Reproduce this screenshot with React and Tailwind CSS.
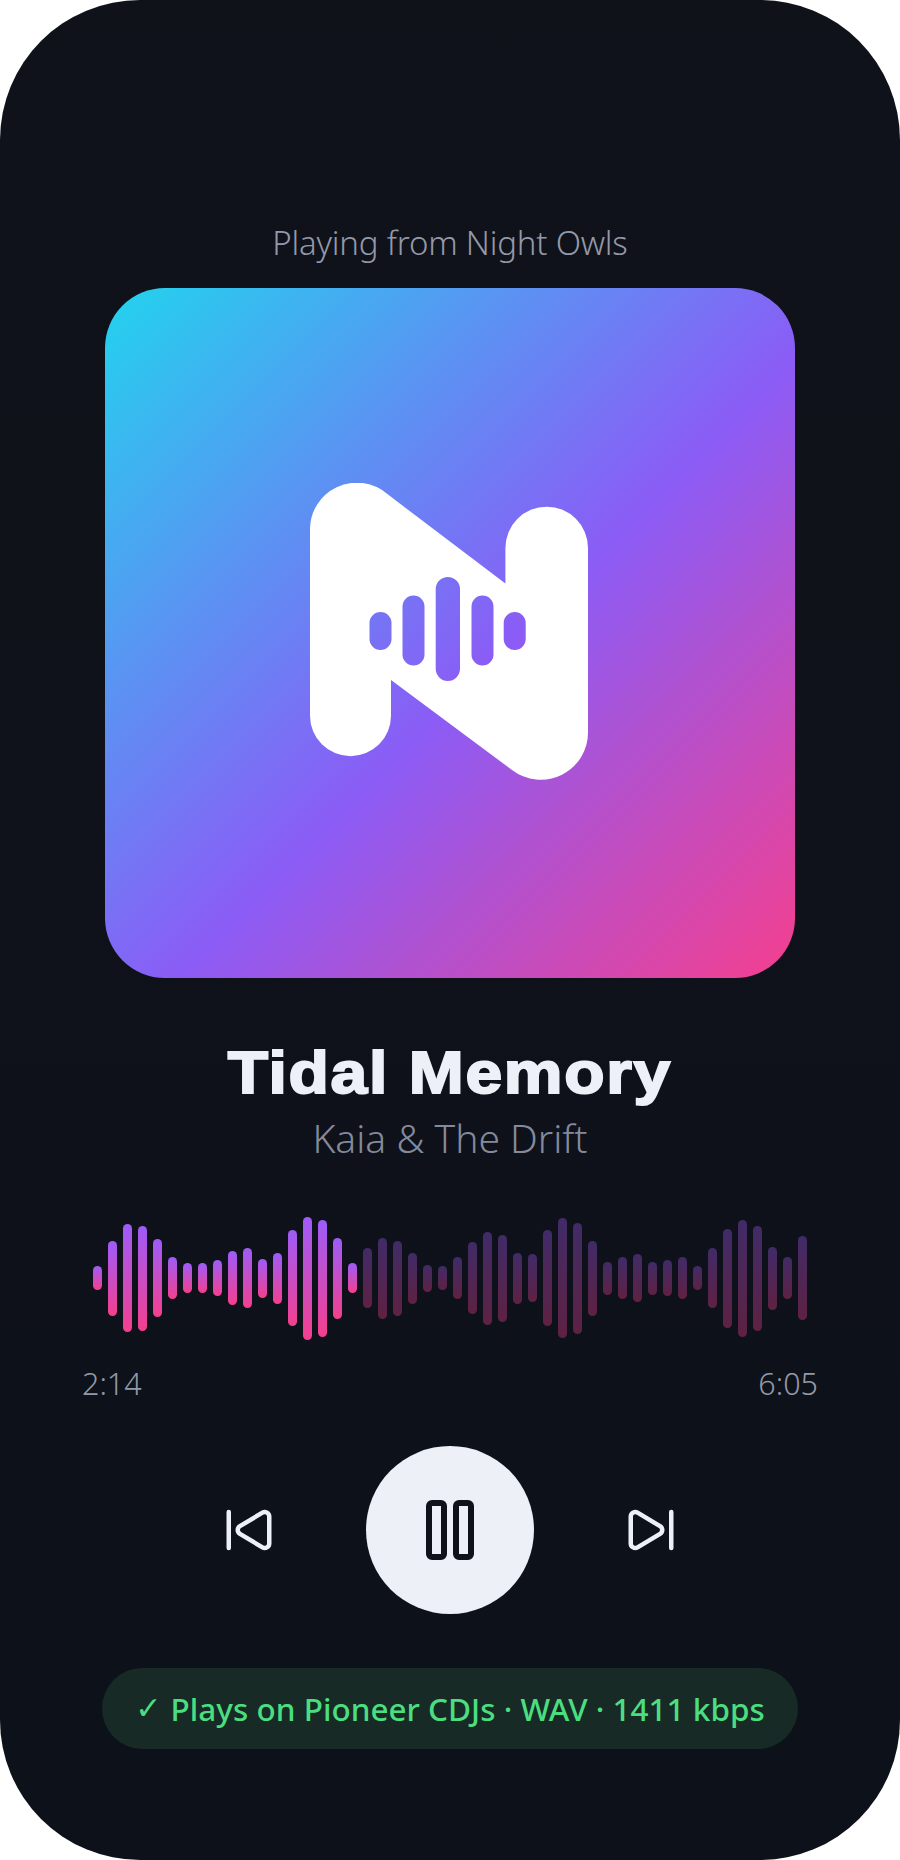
import React from "react";
import { Pause, SkipBack, SkipForward } from "lucide-react";

const heights = [24,75,108,105,78,42,30,30,36,54,60,39,51,96,123,117,81,30,60,81,75,51,27,24,42,72,93,87,51,48,96,120,111,75,33,42,48,33,36,42,24,60,99,117,105,63,42,84];
const PLAYED = 18;

const pill = (x, y, w, h) => {
  const r = w / 2;
  return `M${x} ${y + r}A${r} ${r} 0 0 1 ${x + w} ${y + r}V${y + h - r}A${r} ${r} 0 0 1 ${x} ${y + h - r}Z`;
};

function Logo() {
  const body = "M0 47A46.7 46.7 0 0 1 76.7 10.6L195.4 100.6V65A41.25 41.25 0 0 1 278 65V248.7A47.3 47.3 0 0 1 202 287L81 197V232.7A40.5 40.5 0 0 1 0 232.7Z";
  const holes = [
    pill(59.5, 129, 22, 38),
    pill(92.5, 112.5, 22, 70),
    pill(125.7, 94, 24.3, 104),
    pill(161.5, 112.5, 22, 70),
    pill(193.7, 129, 22, 38),
  ].join("");
  return (
    <svg width="280" height="300" viewBox="0 0 280 300">
      <path d={body + holes} fill="#fff" fillRule="evenodd" />
    </svg>
  );
}

export default function App() {
  return (
    <div className="w-[900px] h-[1860px] bg-white">
      <div className="w-[900px] h-[1860px] rounded-[140px] bg-[linear-gradient(180deg,#10121a,#0d1119)] flex flex-col items-center font-['Noto_Sans',sans-serif] overflow-hidden">
        <div className="mt-[222px] h-[42px] leading-[42px] text-[33px] tracking-[-0.2px] font-light text-[#9499a9]">Playing from Night Owls</div>
        <div className="mt-[24px] w-[690px] h-[690px] rounded-[60px] bg-[linear-gradient(135deg,#22d3ee_0%,#8b5cf6_55%,#f43f8e_100%)] flex items-center justify-center">
          <Logo />
        </div>
        <div className="mt-[60px] h-[70px] leading-[70px] text-[60px] font-bold font-['Liberation_Sans',sans-serif] text-[#eef0f7] tracking-[1.5px] scale-x-[1.1] [-webkit-text-stroke:2px_#eef0f7]">Tidal Memory</div>
        <div className="mt-[4px] h-[52px] leading-[52px] text-[39px] font-light text-[#858a9b]">Kaia &amp; The Drift</div>
        <div className="mt-[52px] w-[714px] h-[124px] flex items-center gap-[6px]">
          {heights.map((h, i) => (
            <div
              key={i}
              className={`w-[9px] shrink-0 rounded-full bg-[linear-gradient(180deg,#9d5cf9,#f43f8e)] ${i < PLAYED ? "" : "opacity-35"}`}
              style={{ height: h }}
            />
          ))}
        </div>
        <div className="mt-[23px] w-[736px] h-[40px] flex justify-between items-center text-[30.5px] font-light text-[#9499a9] leading-[40px]">
          <span>2:14</span>
          <span>6:05</span>
        </div>
        <div className="mt-[43px] flex items-center gap-[90px]">
          <SkipBack size={54} className="text-[#eef0f7]" />
          <div className="w-[168px] h-[168px] rounded-full bg-[#eef0f7] flex items-center justify-center">
            <Pause size={72} className="text-[#0f121a]" />
          </div>
          <SkipForward size={54} className="text-[#eef0f7]" />
        </div>
        <div className="mt-[54px] w-[696px] h-[81px] rounded-full bg-[#172a25] flex items-center justify-center text-[31.5px] font-medium text-[#4ade80]">
          <span className="font-['DejaVu_Sans',sans-serif] mr-[9px]">✓</span>
          <span>Plays on Pioneer CDJs · WAV · 1411 kbps</span>
        </div>
      </div>
    </div>
  );
}
